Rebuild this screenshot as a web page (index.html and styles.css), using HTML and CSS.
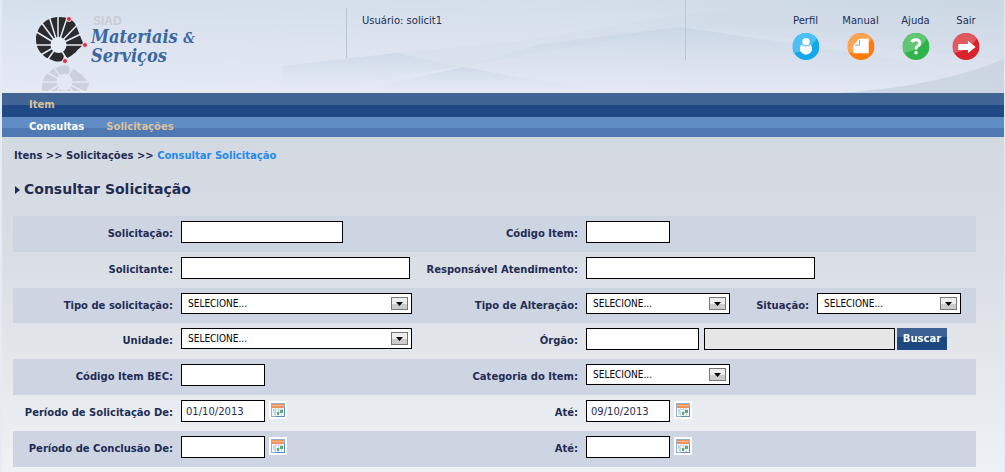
FILE: index.html
```html
<!DOCTYPE html>
<html lang="pt-BR">
<head>
<meta charset="utf-8">
<title>SIAD - Consultar Solicitação</title>
<link rel="stylesheet" href="styles.css">
</head>
<body>
<svg class="defs" aria-hidden="true">
  <defs>
    <symbol id="calendar" viewBox="0 0 18 18">
      <rect width="18" height="18" fill="#fff"/>
      <rect x="2.500" y="2.500" width="13" height="13" fill="#f4f8fc" stroke="#8fb0d2"/>
      <path d="M4 8.500h10M4 11.500h10M6.500 7v8M9.500 7v8M12.500 7v8" stroke="#cfdbea"/>
      <rect x="3" y="3" width="12" height="4" fill="#f0935a"/>
      <path d="M3 4.500h12" stroke="#f7b78a"/>
      <path d="M8 11h2v3H8zM11 9h3v3h-3z" fill="#5cab74"/>
      <path d="M4 9h2v2H4zM5 12h2v2H5zM10 12h1v1h-1z" fill="#c0dacf"/>
      <path d="M15.500 7v8.500H7" fill="none" stroke="#5b8dc2"/>
    </symbol>
    <symbol id="emblem" viewBox="0 0 52 48">
      <path d="M24 2C35 2 40 6 42 13L48 28C48 31 44 33 41 37C38 39 35 42 32 43L29 40L28 45C25 47 21 47 17 45C7 42 1 34 1 25C1 12 11 2 24 2Z" fill="#2b2a2e"/>
      <path d="M23 30L23 1M23 30L33 0M23 30L44 8M23 30L48 18M23 30H50M23 30L14 1M23 30L6 7M23 30L0 16M23 30H0M23 30L4 41M23 30L11 47M23 30L33 46" stroke="#e6ecf6" stroke-width="1.500"/>
      <circle cx="23.500" cy="30" r="8" fill="#e6ecf6"/>
    </symbol>
    <linearGradient id="sky" x1="0" x2="1"><stop offset="0" stop-color="#e0e8f4"/><stop offset=".55" stop-color="#dde4ef"/><stop offset="1" stop-color="#cfd8e4"/></linearGradient>
    <linearGradient id="lift" x1="0" x2="0" y1="0" y2="1"><stop offset="0" stop-color="#cbd8e6" stop-opacity=".5"/><stop offset=".5" stop-color="#dde4f0" stop-opacity=".6"/><stop offset="1" stop-color="#e6ebf5" stop-opacity=".8"/></linearGradient>
    <linearGradient id="slope" x1="0" x2="0" y1="0" y2="1"><stop offset="0" stop-color="#becde0" stop-opacity=".5"/><stop offset="1" stop-color="#dde4f0" stop-opacity="0"/></linearGradient>
    <clipPath id="disc"><circle cx="14" cy="14" r="14"/></clipPath>
  </defs>
</svg>

<div class="page">
  <header class="header">
    <svg class="scenery" viewBox="0 0 1003 93" preserveAspectRatio="none" aria-hidden="true">
      <rect width="1003" height="93" fill="url(#sky)"/>
      <rect width="1003" height="93" fill="url(#lift)"/>
      <path d="M280 66L395 53L460 67L280 93Z" fill="url(#slope)"/>
      <path d="M395 53L520 41L680 15L850 0H1003V60L680 27L460 67Z" fill="#cbd6e5" opacity=".25"/>
      <path d="M395 83L460 67L540 44L680 27L900 60L1003 93H395Z" fill="url(#slope)"/>
      <path d="M398 81L462 67L520 78L620 93H360Z" fill="url(#slope)"/>
      <path d="M840 93Q940 86 1003 59V93Z" fill="#c5cfdb" opacity=".7"/>
    </svg>
    <div class="header-content">
      <a class="brand" href="#">
        <svg class="brand-emblem" viewBox="0 0 54 76" role="img" aria-label="SIAD">
          <g transform="translate(6 97) scale(1 -1)" opacity=".12"><use href="#emblem" width="52" height="48"/></g>
          <use href="#emblem" width="52" height="48"/>
          <g fill="#cf3550" stroke="#f3dde4"><circle cx="34" cy="4" r="2.500"/><circle cx="50" cy="30" r="2.500"/><circle cx="30" cy="46" r="2.500"/></g>
        </svg>
        <span class="brand-text">
          <span class="brand-sub">SIAD</span>
          <span class="brand-name">Materiais <small>&amp;</small><br>Serviços</span>
        </span>
      </a>
      <p class="user">Usuário: solicit1</p>
      <nav class="tools" aria-label="Ferramentas">
        <a href="#">Perfil
          <svg viewBox="0 0 28 28"><g clip-path="url(#disc)"><rect width="28" height="28" fill="#13a9ed"/><path d="M0 0H28Q21 18 0 21Z" fill="#4cc0f2"/></g><circle cx="14" cy="9" r="3.800" fill="#fff"/><path d="M9 12Q14 16 19 12Q22 18 18 21Q14 24 10 21Q6 18 9 12Z" fill="#fff"/></svg></a>
        <a href="#">Manual
          <svg viewBox="0 0 28 28"><g clip-path="url(#disc)"><rect width="28" height="28" fill="#ff7b0a"/><path d="M0 0H28Q21 18 0 21Z" fill="#ffa551"/></g><path d="M12 6H22V21H6V13Z" fill="#fff"/><path d="M12.500 7V12.500H8" fill="none" stroke="#a98bb0"/></svg></a>
        <a href="#">Ajuda
          <svg viewBox="0 0 28 28"><g clip-path="url(#disc)"><rect width="28" height="28" fill="#2fb44a"/><path d="M0 0H28Q21 18 0 21Z" fill="#61c674"/></g><path d="M9.500 9.500Q10.500 7 14 7T18 10.500Q18 12.300 16 13.300Q14 14.500 14 17" fill="none" stroke="#fff" stroke-width="3"/><circle cx="14" cy="20.500" r="1.800" fill="#fff"/></svg></a>
        <a class="exit" href="#">Sair
          <svg viewBox="0 0 28 28"><g clip-path="url(#disc)"><rect width="28" height="28" fill="#d9222b"/><path d="M0 0H28Q21 18 0 21Z" fill="#e25960"/></g><path d="M6 11.500H16V8L24 14.500L16 21V17.500H6Z" fill="#fff"/></svg></a>
      </nav>
    </div>
  </header>

  <nav class="menu menu-main" aria-label="Principal"><a href="#">Item</a></nav>
  <nav class="menu menu-sub" aria-label="Item"><a class="current" href="#">Consultas</a><a href="#">Solicitações</a></nav>

  <main class="content">
    <p class="crumbs">Itens &gt;&gt; Solicitações &gt;&gt; <a href="#">Consultar Solicitação</a></p>
    <h1 class="title">Consultar Solicitação</h1>

    <form class="form">
      <div class="row">
        <label for="solicitacao">Solicitação:</label>
        <div class="field"><input class="w-162" id="solicitacao" type="text"></div>
        <label for="codigo">Código Item:</label>
        <div class="field"><input class="w-84" id="codigo" type="text"></div>
      </div>
      <div class="row">
        <label for="solicitante">Solicitante:</label>
        <div class="field"><input class="w-229" id="solicitante" type="text"></div>
        <label for="responsavel">Responsável Atendimento:</label>
        <div class="field"><input class="w-229" id="responsavel" type="text"></div>
      </div>
      <div class="row row-select">
        <label for="tipo">Tipo de solicitação:</label>
        <div class="field"><select class="w-231" id="tipo"><option>SELECIONE...</option></select></div>
        <label for="alteracao">Tipo de Alteração:</label>
        <div class="field"><select class="w-144" id="alteracao"><option>SELECIONE...</option></select>
          <label class="inner-label" for="situacao">Situação:</label>
          <select class="w-144" id="situacao"><option>SELECIONE...</option></select></div>
      </div>
      <div class="row">
        <label for="unidade">Unidade:</label>
        <div class="field"><select class="w-231" id="unidade"><option>SELECIONE...</option></select></div>
        <label for="orgao">Órgão:</label>
        <div class="field lookup"><input class="w-113" id="orgao" type="text"><input class="w-191" type="text" aria-label="Nome do órgão" disabled><button class="search" type="button">Buscar</button></div>
      </div>
      <div class="row">
        <label for="bec">Código Item BEC:</label>
        <div class="field"><input class="w-84" id="bec" type="text"></div>
        <label for="categoria">Categoria do Item:</label>
        <div class="field"><select class="w-144" id="categoria"><option>SELECIONE...</option></select></div>
      </div>
      <div class="row">
        <label for="sol-de">Período de Solicitação De:</label>
        <div class="field date"><input class="w-84" id="sol-de" type="text" value="01/10/2013"><button class="pick" type="button" aria-label="Calendário"><svg><use href="#calendar"/></svg></button></div>
        <label for="sol-ate">Até:</label>
        <div class="field date"><input class="w-84" id="sol-ate" type="text" value="09/10/2013"><button class="pick" type="button" aria-label="Calendário"><svg><use href="#calendar"/></svg></button></div>
      </div>
      <div class="row">
        <label for="con-de">Período de Conclusão De:</label>
        <div class="field date"><input class="w-84" id="con-de" type="text"><button class="pick" type="button" aria-label="Calendário"><svg><use href="#calendar"/></svg></button></div>
        <label for="con-ate">Até:</label>
        <div class="field date"><input class="w-84" id="con-ate" type="text"><button class="pick" type="button" aria-label="Calendário"><svg><use href="#calendar"/></svg></button></div>
      </div>
    </form>
  </main>
</div>
</body>
</html>
```
FILE: styles.css
```css
* { box-sizing: border-box; }

body {
  margin: 0;
  background: #e6ebf3;
  color: #1f2d54;
  font: 10px/16px Verdana, "DejaVu Sans", sans-serif;
}

a { color: inherit; text-decoration: none; }
p, h1 { margin: 0; }
.defs { position: absolute; width: 0; height: 0; }
.page { margin: 0 1px 0 2px; }

/* Header */
.header { display: grid; }
.header > * { grid-area: 1 / 1; }
.scenery { width: 100%; height: 100%; min-height: 0; }
.header-content {
  position: relative;
  display: grid;
  grid-template-columns: 344px 339px 1fr;
  height: 93px;
}
.brand { display: flex; padding: 15px 0 0 33px; gap: 2px; }
.brand-emblem { display: block; width: 54px; height: 76px; }
.brand-text { display: flex; flex-direction: column; color: #3c67a0; }
.brand-sub {
  color: #c9cccf;
  font: bold 12px/13px "Liberation Sans", Arial, sans-serif;
  padding-left: 2px;
}
.brand-name { font: italic bold 18px/17px "DejaVu Serif Condensed", "DejaVu Serif", serif; }
.brand-name small { font-size: 14px; }
.user {
  height: 50px;
  margin-top: 8px;
  padding: 5px 0 0 15px;
  border-left: 1px solid #b9c3d3;
}
.tools {
  display: flex;
  justify-content: flex-end;
  height: 60px;
  padding: 13px 13px 0 0;
  border-left: 1px solid #bac4d2;
}
.tools a {
  display: flex;
  flex-direction: column;
  align-items: center;
  gap: 4px;
  width: 55px;
}
.tools .exit { width: 50px; margin-left: -2px; }
.tools svg { width: 28px; height: 28px; }

/* Menus */
.menu {
  display: flex;
  align-items: center;
  gap: 22px;
  padding: 0 0 1px 27px;
  color: #dfc09c;
  font-weight: bold;
}
.menu-main { height: 24px; background: linear-gradient(#406594 50%, #1f4a85 50%); }
.menu-sub { height: 20px; background: linear-gradient(#618dc5 55%, #4e79b3 55%); }
.menu .current { color: #fff; }

/* Content */
.content {
  padding: 11px 28px 5px 11px;
  background: linear-gradient(#d3d9e1, #d9dee5 35%, #e3e7ec 65%, #eef1f6);
}
.crumbs { padding-left: 1px; font-weight: bold; }
.crumbs a { color: #2389ea; }
.title {
  display: flex;
  align-items: center;
  gap: 4px;
  padding: 15px 0 16px 2px;
  font-size: 14px;
  line-height: 21px;
}
.title::before {
  content: "";
  border: 4px solid transparent;
  border-left: 5px solid #1f2d54;
  border-right: 0;
}

/* Form */
.row {
  display: grid;
  grid-template-columns: 160px 233px 156px 1fr;
  column-gap: 8px;
  height: 36px;
  padding-top: 5px;
}
.row:nth-child(odd) { background: #cdd4e2; }
.row-select { height: 35px; }
.row label { padding-top: 5px; font-weight: bold; line-height: 16px; text-align: right; white-space: nowrap; }
.field { display: flex; align-items: flex-start; }
.field .inner-label { width: 79px; margin-right: 8px; }

input, select {
  flex: none;
  margin: 0;
  border: 1px solid #000;
  border-radius: 0;
  background-color: #fff;
  color: #1f2d54;
  font: 10px/16px Verdana, "DejaVu Sans", sans-serif;
}
input { height: 22px; padding: 0 4px; }
input:disabled { background: #e6e6e6; }
select {
  appearance: none;
  height: 21px;
  padding: 0 24px 0 6px;
  color: #000;
  font-family: "DejaVu Sans Condensed", Tahoma, sans-serif;
  background: #fff url("data:image/svg+xml,%3Csvg xmlns='http://www.w3.org/2000/svg' width='17' height='13'%3E%3Crect x='.5' y='.5' width='16' height='12' fill='%23eee' stroke='%23777'/%3E%3Cpath d='M1 7h15v5H1z' fill='%23ccc'/%3E%3Cpath d='M5 5h7L8.500 9z'/%3E%3C/svg%3E") no-repeat right 3px center;
}

.w-84 { width: 84px; }
.w-113 { width: 113px; }
.w-144 { width: 144px; }
.w-162 { width: 162px; }
.w-191 { width: 191px; }
.w-229 { width: 229px; }
.w-231 { width: 231px; }

.lookup { gap: 2px; }
.lookup .w-113 { margin-right: 3px; }
.search {
  width: 50px;
  height: 22px;
  padding: 0;
  border: 0;
  background: linear-gradient(#3c6193 40%, #1d4780 40%);
  color: #fff;
  font: bold 10px/16px Verdana, "DejaVu Sans", sans-serif;
}
.date { gap: 4px; }
.pick { height: 18px; margin-top: 1px; padding: 0; border: 0; background: none; }
.pick svg { display: block; width: 18px; height: 18px; }
```
